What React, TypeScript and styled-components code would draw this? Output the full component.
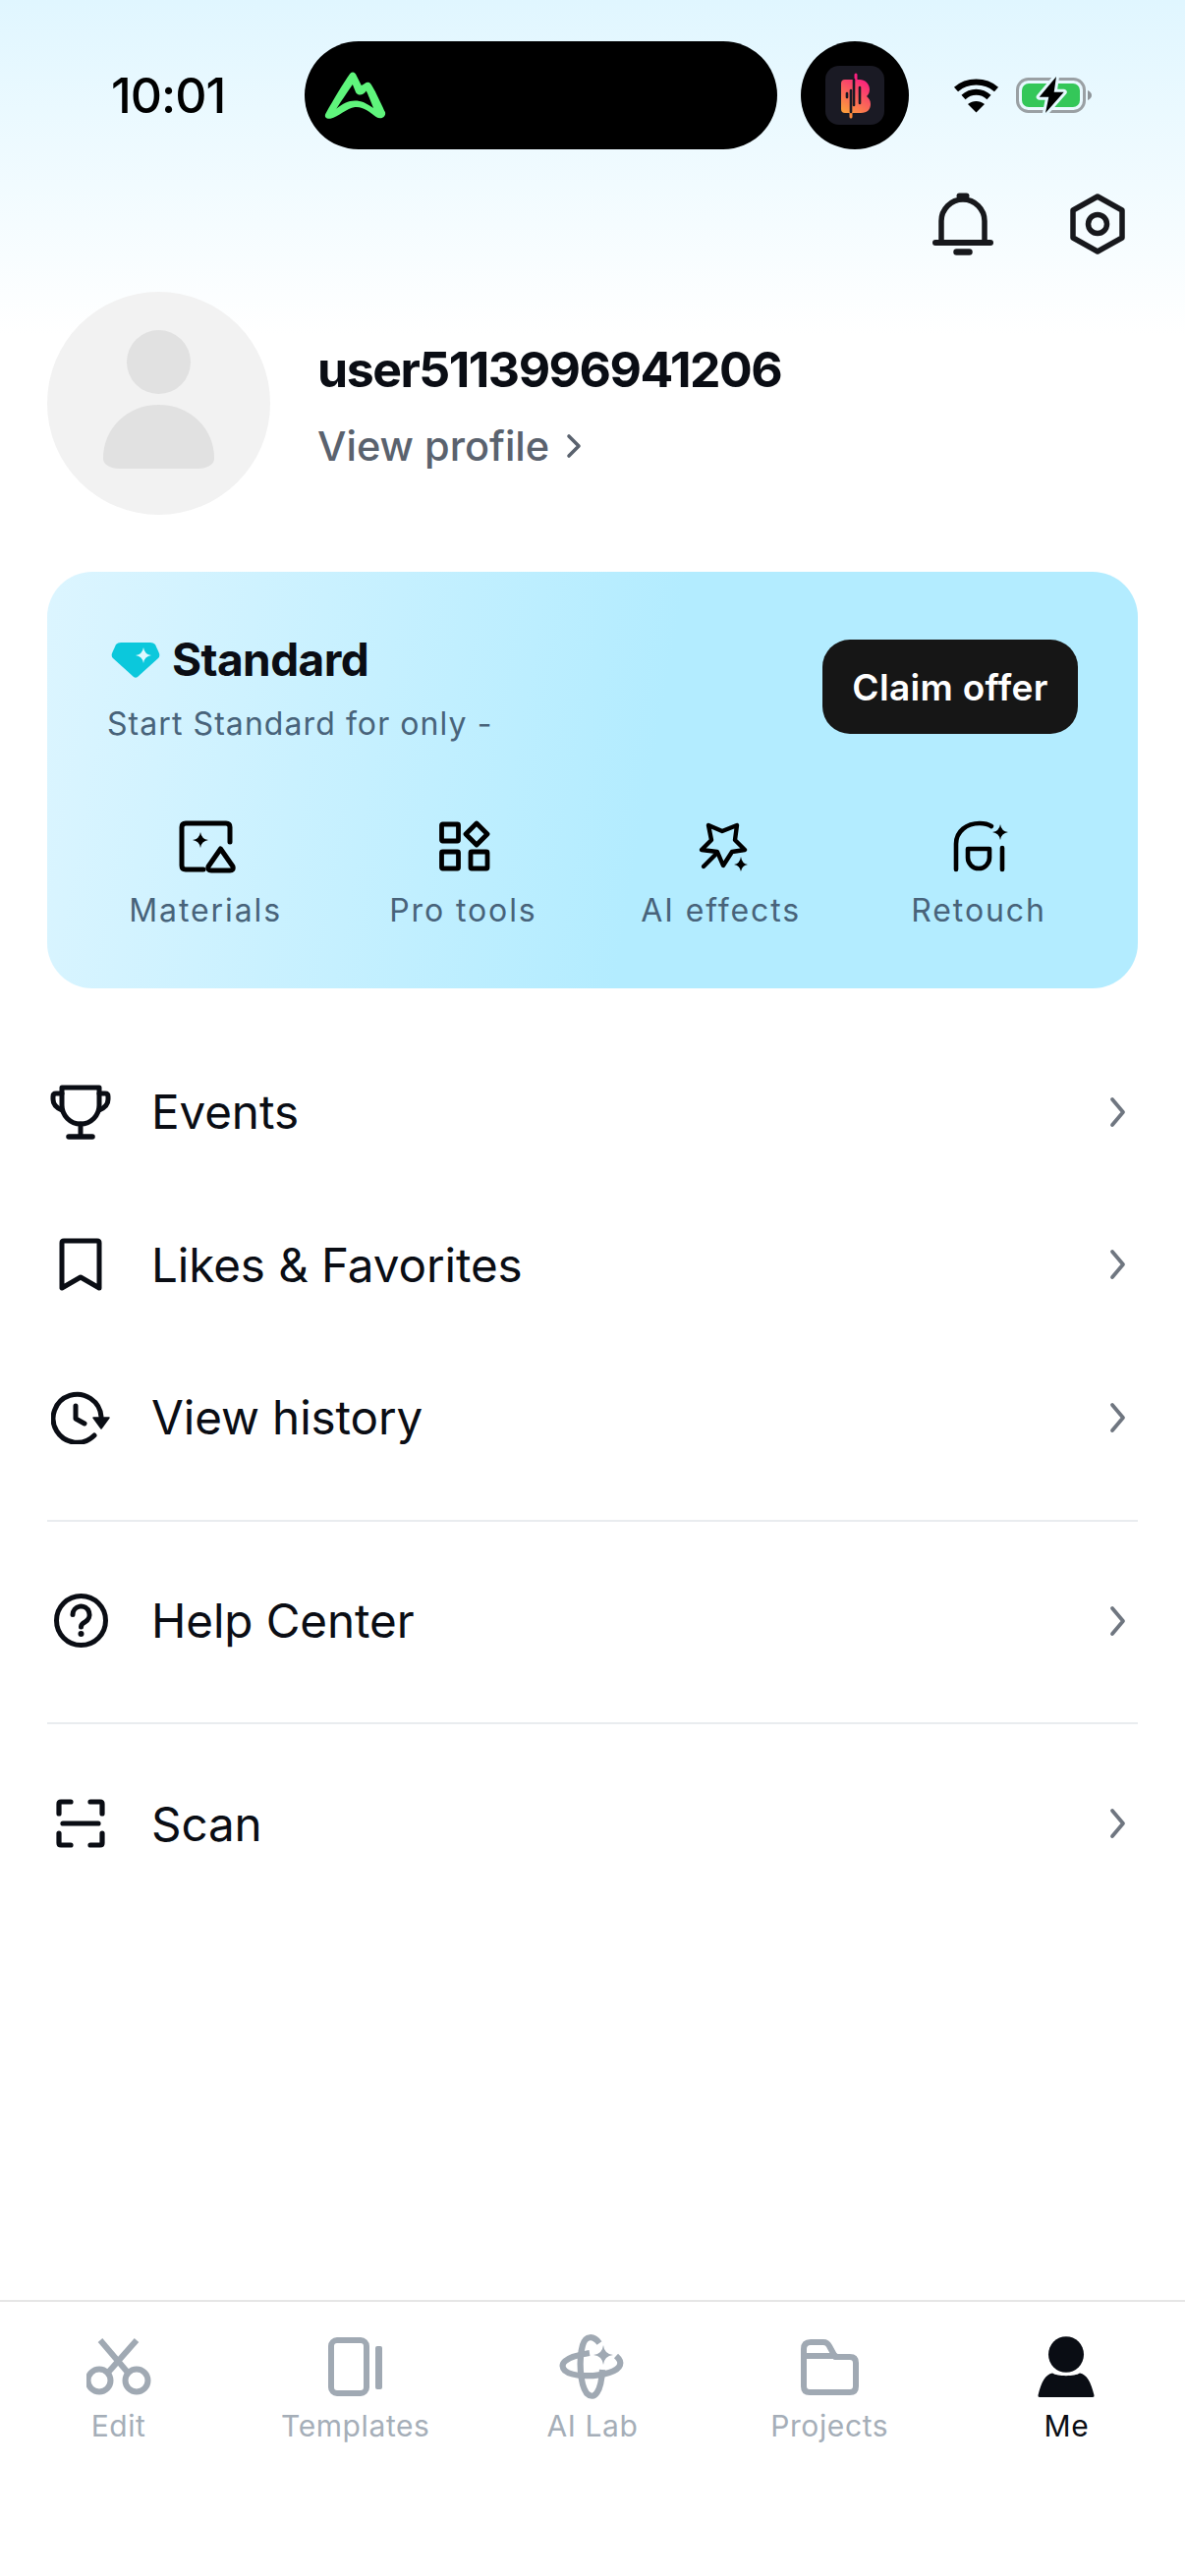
import React from "react";
import styled, { createGlobalStyle } from "styled-components";

const Global = createGlobalStyle`
  html, body { margin: 0; padding: 0; background: #fff; }
  body { font-family: Inter, "Noto Sans", sans-serif; -webkit-font-smoothing: antialiased; }
  * { box-sizing: border-box; }
`;

const Page = styled.div`
  width: 1206px;
  height: 2622px;
  display: flex;
  flex-direction: column;
  overflow: hidden;
  background: linear-gradient(180deg, #e0f6ff 0, #ffffff 340px);
`;

const StatusBar = styled.div`
  display: flex;
  align-items: center;
  height: 110px;
  margin-top: 42px;
  padding-left: 113px;
`;
const Time = styled.span`
  width: 197px;
  font-size: 50px;
  font-weight: 500;
  letter-spacing: -1px;
  color: #000;
`;
const Island = styled.div`
  width: 481px;
  height: 110px;
  border-radius: 55px;
  background: #000;
  display: flex;
  align-items: center;
  padding-left: 18px;
`;
const IslandDot = styled.div`
  width: 110px;
  height: 110px;
  border-radius: 50%;
  background: #000;
  margin-left: 24px;
  display: flex;
  align-items: center;
  justify-content: center;
`;
const StatusIcons = styled.div`
  display: flex;
  align-items: center;
  gap: 17px;
  margin-left: 45px;
`;

const Actions = styled.div`
  display: flex;
  justify-content: flex-end;
  align-items: center;
  gap: 78px;
  height: 64px;
  margin-top: 44px;
  padding-right: 61px;
`;

const Profile = styled.div`
  display: flex;
  align-items: center;
  gap: 48px;
  margin-top: 37px;
  padding-left: 48px;
`;
const Avatar = styled.div`
  width: 227px;
  height: 227px;
  border-radius: 50%;
  background: #f2f2f2;
  display: flex;
  flex-direction: column;
  align-items: center;
  justify-content: center;
  gap: 11px;
  padding-bottom: 8px;
  flex: none;
`;
const AvatarHead = styled.div`
  width: 65px;
  height: 65px;
  border-radius: 50%;
  background: #e1e1e1;
`;
const AvatarBody = styled.div`
  width: 113px;
  height: 65px;
  background: #e1e1e1;
  border-radius: 56px 56px 16px 16px / 54px 54px 10px 10px;
`;
const ProfileText = styled.div`
  display: flex;
  flex-direction: column;
  gap: 22px;
  margin-top: 4px;
`;
const UserName = styled.div`
  font-size: 50px;
  line-height: 60px;
  font-weight: 700;
  letter-spacing: -1.5px;
  color: #0a0d14;
`;
const ViewProfile = styled.div`
  display: flex;
  align-items: center;
  gap: 17px;
  font-size: 41.5px;
  line-height: 52px;
  font-weight: 500;
  color: #5a626e;
`;

const Card = styled.section`
  margin: 58px 48px 0;
  height: 424px;
  border-radius: 46px;
  background: linear-gradient(100deg, #dcf5ff 0%, #b3ecff 55%, #b3ecff 100%);
  padding-top: 69px;
`;
const CardTop = styled.div`
  display: flex;
  justify-content: space-between;
  padding: 0 61px;
  height: 96px;
`;
const CardHeading = styled.div`
  display: flex;
  flex-direction: column;
  gap: 26px;
`;
const PlanLine = styled.div`
  display: flex;
  align-items: center;
  gap: 12px;
  height: 40px;
  padding-left: 4px;
`;
const PlanName = styled.span`
  font-size: 46px;
  font-weight: 700;
  letter-spacing: -0.6px;
  color: #0a0d14;
`;
const PlanNote = styled.div`
  font-size: 32px;
  line-height: 40px;
  color: #48637a;
  letter-spacing: 1.07px;
`;
const ClaimButton = styled.div`
  width: 260px;
  height: 96px;
  border-radius: 28px;
  background: #161616;
  color: #fff;
  font-size: 37px;
  font-weight: 600;
  letter-spacing: 0.3px;
  display: flex;
  align-items: center;
  justify-content: center;
`;
const Features = styled.div`
  display: grid;
  grid-template-columns: repeat(4, 262.3px);
  margin: 88px 0 0 30px;
`;
const Feature = styled.div`
  display: flex;
  flex-direction: column;
  align-items: center;
`;
const FeatureIcon = styled.div`
  height: 54px;
  display: flex;
  align-items: center;
  padding-left: 4px;
`;
const FeatureLabel = styled.div`
  margin-top: 20px;
  font-size: 32px;
  line-height: 36px;
  letter-spacing: 1.9px;
  color: #48637a;
`;

const Menu = styled.nav`
  margin-top: 48px;
  padding: 0 48px;
`;
const Row = styled.div`
  height: 155.6px;
  display: flex;
  align-items: center;
`;
const RowIcon = styled.div`
  width: 68px;
  margin-right: 38px;
  display: flex;
  justify-content: center;
`;
const RowLabel = styled.span`
  flex: 1;
  font-size: 47.6px;
  font-weight: 400;
  letter-spacing: -0.1px;
  color: #0a0d14;
`;
const RowChevron = styled.div`
  margin-right: 12px;
  display: flex;
`;
const Divider = styled.hr`
  margin: 26px 0 23px;
  border: 0;
  height: 2px;
  background: #e9ecef;
`;

const TabBar = styled.footer`
  margin-top: auto;
  height: 281px;
  border-top: 2px solid #e6e6e6;
  background: #fff;
  display: grid;
  grid-template-columns: repeat(5, 1fr);
  padding-top: 33px;
`;
const Tab = styled.div`
  display: flex;
  flex-direction: column;
  align-items: center;
`;
const TabIcon = styled.div`
  height: 66px;
  display: flex;
  align-items: center;
  justify-content: center;
`;
const TabLabel = styled.div<{ $active?: boolean }>`
  margin-top: 9px;
  font-size: 30px;
  line-height: 36px;
  letter-spacing: 0.6px;
  color: ${(p) => (p.$active ? "#0a0d14" : "#a5aeb8")};
`;

const Line = styled.svg<{ $color?: string; $w?: number }>`
  display: block;
  fill: none;
  stroke: ${(p) => p.$color ?? "#0a0d14"};
  stroke-width: ${(p) => p.$w ?? 5};
  stroke-linecap: round;
  stroke-linejoin: round;
  flex: none;
`;
const Solid = styled.svg`
  display: block;
  flex: none;
`;

const GRAY = "#a0a9b3";

const MountainLogo = () => (
  <Solid width="68" height="53" viewBox="115 120 205 160">
    <path
      fill="#5ff57c"
      fillRule="evenodd"
      d="M125 255 C150 210 180 160 200 132 C208 124 216 128 220 138 L235 168 C245 165 250 155 260 160 C270 165 300 235 308 250 C312 265 295 275 280 265 C260 250 240 232 215 235 C190 238 165 265 140 270 C128 272 120 265 125 255 Z M158 240 C175 225 195 215 215 215 C235 215 250 222 272 238 C265 220 255 195 250 185 C240 200 225 200 218 190 L208 165 C195 185 175 212 158 240 Z"
    />
  </Solid>
);

const AppBadge = () => (
  <Solid width="60" height="60" viewBox="0 0 60 60">
    <defs>
      <linearGradient id="bgrad" x1="0.8" y1="0" x2="0.2" y2="1">
        <stop offset="0" stopColor="#f9207e" />
        <stop offset="1" stopColor="#fb9a3c" />
      </linearGradient>
    </defs>
    <rect width="60" height="60" rx="14" fill="#1a1a24" />
    <path
      fill="url(#bgrad)"
      d="M20 14 Q16 14 16 18 V44 Q16 48 20 48 H36 C43 48 46 44 46 39 C46 35 44 33 42 31 C44 29 45 27 45 24 C45 18 40 14 35 14 Z"
    />
    <path stroke="#f9207e" strokeWidth="3" strokeLinecap="round" d="M31 9 V14" />
    <path stroke="#fb8a3c" strokeWidth="3" strokeLinecap="round" d="M26 47 V52" />
    <g stroke="#1a1a24" strokeWidth="2.6" strokeLinecap="round">
      <path d="M22 28 V32" />
      <path d="M26 25 V47" />
      <path d="M29 14 V40" />
      <path d="M35 22 V38" />
    </g>
  </Solid>
);

const Wifi = () => (
  <Solid width="47" height="36" viewBox="0 0 47 36">
    <path d="M3 12 C14 2 33 2 44 12" fill="none" stroke="#000" strokeWidth="6" />
    <path d="M10.5 20 C18 13 29 13 36.5 20" fill="none" stroke="#000" strokeWidth="6" />
    <path d="M15 27 C20 23 27 23 32 27 L23.5 35.5 Z" fill="#000" />
  </Solid>
);

const Battery = () => (
  <Solid width="78" height="40" viewBox="0 0 78 40">
    <rect x="1.5" y="3.5" width="68" height="33" rx="11" fill="none" stroke="#9aa0a4" strokeWidth="3" />
    <rect x="6" y="8" width="59" height="24" rx="7" fill="#34c759" />
    <path d="M73 15 Q77 17 77 20 Q77 23 73 25 Z" fill="#8e9499" />
    <path
      d="M41 1 L23.7 21.7 H33.3 L30 38 L48.7 16.7 H38.7 Z"
      fill="#000"
      stroke="#e6f8ff"
      strokeWidth="6"
      strokeLinejoin="round"
      paintOrder="stroke"
    />
  </Solid>
);

const Bell = () => (
  <Line width="62" height="64" viewBox="0 0 62 64" $color="#17181c" $w={5.5}>
    <path d="M9 51 V29 A22 22 0 0 1 53 29 V51" />
    <path d="M3 51 H59" strokeWidth="6" />
    <rect x="26" y="2" width="10" height="3" rx="1.5" strokeWidth="3" />
    <rect x="23" y="59" width="16" height="3" rx="1.5" strokeWidth="3.5" />
  </Line>
);

const Hexagon = () => (
  <Line width="56" height="62" viewBox="0 0 56 62" $color="#17181c" $w={5.5}>
    <path d="M28 3 L53 17 V45 L28 59 L3 45 V17 Z" />
    <circle cx="28" cy="31" r="9.5" />
  </Line>
);

const Chevron = ({ small }: { small?: boolean }) =>
  small ? (
    <Line width="16" height="26" viewBox="0 0 16 26" $color="#5a626e" $w={3.6}>
      <path d="M3 3 L13 13 L3 23" />
    </Line>
  ) : (
    <Line width="17" height="32" viewBox="0 0 17 32" $color="#6f7680" $w={3.8}>
      <path d="M3 3 L14 16 L3 29" />
    </Line>
  );

const Gem = () => (
  <Solid width="50" height="37" viewBox="0 0 50 37">
    <path d="M10 1 H40 Q43 1 45 3 L49 12 Q50 15 48 17 L27 36 Q25 37.5 23 36 L2 17 Q0 15 1 12 L5 3 Q7 1 10 1 Z" fill="#0bc8dc" />
    <path d="M33 6 Q34 13 41 14 Q34 15 33 22 Q32 15 25 14 Q32 13 33 6 Z" fill="#dff9ff" />
  </Solid>
);

const MaterialsIcon = () => (
  <Line width="58" height="54" viewBox="0 0 58 54" $color="#000">
    <path d="M52 22 V7 Q52 3 48 3 H7 Q3 3 3 7 V46 Q3 50 7 50 H25" />
    <path d="M42.5 29 L55 47 Q56 51 52 51 H33 Q29 51 30 47 Z" />
    <path d="M22 12 Q23 19 30 20 Q23 21 22 28 Q21 21 14 20 Q21 19 22 12 Z" fill="#000" stroke="none" />
  </Line>
);

const ProToolsIcon = () => (
  <Line width="52" height="54" viewBox="0 0 52 54" $color="#000" $w={4.8}>
    <rect x="2.5" y="4" width="17" height="17" rx="1" />
    <rect x="2.5" y="32" width="17" height="17" rx="1" />
    <rect x="32" y="32" width="17" height="17" rx="1" />
    <path d="M38 3 L49 14 L38 25 L27 14 Z" />
  </Line>
);

const EffectsIcon = () => (
  <Line width="50" height="50" viewBox="0 0 50 50" $color="#000" $w={4.4}>
    <path d="M10 3 L24 9 L39 3 L37 18 L47 28 L34 30 L25 44 L19 30 L3 28 L13 18 Z" />
    <path d="M5 45 L17 33" />
    <path d="M43 35 Q44 42 50 43 Q44 44 43 50 Q42 44 36 43 Q42 42 43 35 Z" fill="#000" stroke="none" />
  </Line>
);

const RetouchIcon = () => (
  <Line width="56" height="54" viewBox="0 0 56 54" $color="#000" $w={4.6}>
    <path d="M3 50 V24 C3 11 14 3 27 3 C32 3 36 4 39 6" />
    <path d="M15 29 H37 V38 A11 11 0 0 1 15 38 Z" />
    <path d="M50 28 V50" />
    <path d="M48 4 Q49 11 56 12 Q49 13 48 20 Q47 13 40 12 Q47 11 48 4 Z" fill="#000" stroke="none" />
  </Line>
);

const TrophyIcon = () => (
  <Line width="62" height="56" viewBox="0 0 62 56">
    <path d="M12 3 H50 V21 A19 19 0 0 1 12 21 Z" />
    <path d="M31 40 V52" />
    <path d="M19 53 H43" strokeWidth="5.5" />
    <path d="M12 9 H6 Q3 9 3 12 V15 Q3 22 12 26" />
    <path d="M50 9 H56 Q59 9 59 12 V15 Q59 22 50 26" />
  </Line>
);

const BookmarkIcon = () => (
  <Line width="44" height="54" viewBox="0 0 44 54">
    <path d="M3 5 Q3 3 5 3 H39 Q41 3 41 5 V51 L22 40 L3 51 Z" />
  </Line>
);

const HistoryIcon = () => (
  <Line width="60" height="54" viewBox="0 0 60 54">
    <path d="M44 45 A24.5 24.5 0 1 1 51 26" />
    <path d="M25 15 V28 L34 33" />
    <path d="M43 27 H59 L51 38 Z" fill="#0a0d14" strokeWidth="1.5" />
  </Line>
);

const HelpIcon = () => (
  <Line width="55" height="55" viewBox="0 0 55 55">
    <circle cx="27.5" cy="27.5" r="25" />
    <path d="M19 21.5 A8.5 8.5 0 1 1 31.5 29 Q27.5 31 27.5 34" />
    <circle cx="27.5" cy="41" r="3" fill="#0a0d14" stroke="none" />
  </Line>
);

const ScanIcon = () => (
  <Line width="50" height="50" viewBox="0 0 50 50" $w={5.2}>
    <path d="M3 15 V5 Q3 3 5 3 H15" />
    <path d="M35 3 H45 Q47 3 47 5 V15" />
    <path d="M3 35 V45 Q3 47 5 47 H15" />
    <path d="M35 47 H45 Q47 47 47 45 V35" />
    <path d="M7 25 H43" />
  </Line>
);

const ScissorsIcon = () => (
  <Line width="66" height="58" viewBox="0 0 66 58" $color={GRAY} $w={6}>
    <circle cx="13" cy="43" r="11.5" />
    <circle cx="51" cy="43" r="11.5" />
    <path d="M14 2 L43 36" strokeLinecap="butt" />
    <path d="M51 2 L21 36" strokeLinecap="butt" />
  </Line>
);

const TemplatesIcon = () => (
  <Line width="55" height="60" viewBox="0 0 55 60" $color={GRAY} $w={6}>
    <rect x="3" y="3" width="36" height="54" rx="6" />
    <rect x="48" y="9" width="7" height="44" rx="2" fill={GRAY} stroke="none" />
  </Line>
);

const LabIcon = () => (
  <Line width="70" height="70" viewBox="0 0 70 70" $color={GRAY} $w={6.2}>
    <path d="M59 24 C66 30 65 37 52 41 C36 46 14 45 7 39 C1 33 5 25 32 21" strokeLinecap="butt" />
    <path d="M42 11 C36 3 28 3 25 13 C21 27 22 52 29 62 C37 70 44 60 45 38" strokeLinecap="butt" />
    <path d="M46 13 Q47 22 56 23 Q47 24 46 33 Q45 24 36 23 Q45 22 46 13 Z" fill={GRAY} stroke="none" />
  </Line>
);

const FolderIcon = () => (
  <Line width="59" height="57" viewBox="0 0 59 57" $color={GRAY} $w={6}>
    <path d="M3 10 Q3 3 10 3 H23 Q27 3 29 7 L35 18 H50 Q56 18 56 24 V48 Q56 54 50 54 H9 Q3 54 3 48 Z" />
    <path d="M3 17 H35" />
  </Line>
);

const MeIcon = () => (
  <Solid width="58" height="63" viewBox="0 0 58 63">
    <ellipse cx="29" cy="18.5" rx="18" ry="18.3" fill="#0a0d14" />
    <path d="M15 37.5 C20 41 38 41 43 37.5 C50 39 54 46 57.5 60 Q58 62 56 62 H2 Q0 62 0.5 60 C4 46 8 39 15 37.5 Z" fill="#0a0d14" />
  </Solid>
);

const features = [
  { label: "Materials", icon: <MaterialsIcon /> },
  { label: "Pro tools", icon: <ProToolsIcon /> },
  { label: "AI effects", icon: <EffectsIcon /> },
  { label: "Retouch", icon: <RetouchIcon /> },
];

const MenuRow = ({ icon, label }: { icon: React.ReactNode; label: string }) => (
  <Row>
    <RowIcon>{icon}</RowIcon>
    <RowLabel>{label}</RowLabel>
    <RowChevron>
      <Chevron />
    </RowChevron>
  </Row>
);

const tabs = [
  { label: "Edit", icon: <ScissorsIcon /> },
  { label: "Templates", icon: <TemplatesIcon /> },
  { label: "AI Lab", icon: <LabIcon /> },
  { label: "Projects", icon: <FolderIcon /> },
  { label: "Me", icon: <MeIcon />, active: true },
];

export default function App() {
  return (
    <Page>
      <Global />
      <StatusBar>
        <Time>10:01</Time>
        <Island>
          <MountainLogo />
        </Island>
        <IslandDot>
          <AppBadge />
        </IslandDot>
        <StatusIcons>
          <Wifi />
          <Battery />
        </StatusIcons>
      </StatusBar>

      <Actions>
        <Bell />
        <Hexagon />
      </Actions>

      <Profile>
        <Avatar>
          <AvatarHead />
          <AvatarBody />
        </Avatar>
        <ProfileText>
          <UserName>user5113996941206</UserName>
          <ViewProfile>
            View profile
            <Chevron small />
          </ViewProfile>
        </ProfileText>
      </Profile>

      <Card>
        <CardTop>
          <CardHeading>
            <PlanLine>
              <Gem />
              <PlanName>Standard</PlanName>
            </PlanLine>
            <PlanNote>Start Standard for only -</PlanNote>
          </CardHeading>
          <ClaimButton>Claim offer</ClaimButton>
        </CardTop>
        <Features>
          {features.map((f) => (
            <Feature key={f.label}>
              <FeatureIcon>{f.icon}</FeatureIcon>
              <FeatureLabel>{f.label}</FeatureLabel>
            </Feature>
          ))}
        </Features>
      </Card>

      <Menu>
        <MenuRow icon={<TrophyIcon />} label="Events" />
        <MenuRow icon={<BookmarkIcon />} label="Likes & Favorites" />
        <MenuRow icon={<HistoryIcon />} label="View history" />
        <Divider />
        <MenuRow icon={<HelpIcon />} label="Help Center" />
        <Divider />
        <MenuRow icon={<ScanIcon />} label="Scan" />
      </Menu>

      <TabBar>
        {tabs.map((t) => (
          <Tab key={t.label}>
            <TabIcon>{t.icon}</TabIcon>
            <TabLabel $active={t.active}>{t.label}</TabLabel>
          </Tab>
        ))}
      </TabBar>
    </Page>
  );
}
